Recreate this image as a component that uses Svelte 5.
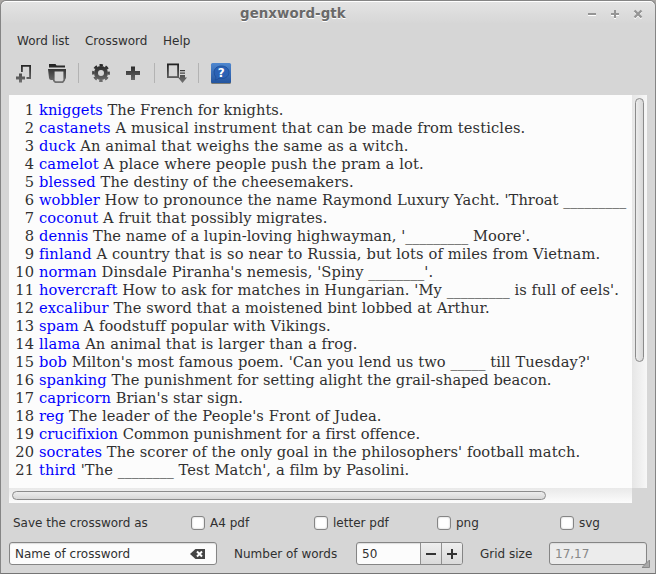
<script>
  // Each entry: word, clue, extra width in px spread over the line
  const words = [
    ['kniggets', 'The French for knights.', 0],
    ['castanets', 'A musical instrument that can be made from testicles.', 7.5],
    ['duck', 'An animal that weighs the same as a witch.', 6],
    ['camelot', 'A place where people push the pram a lot.', 6],
    ['blessed', 'The destiny of the cheesemakers.', 5],
    ['wobbler', "How to pronounce the name Raymond Luxury Yacht. 'Throat _________", 3],
    ['coconut', 'A fruit that possibly migrates.', 2.5],
    ['dennis', "The name of a lupin-loving highwayman, '_________ Moore'.", 2],
    ['finland', 'A country that is so near to Russia, but lots of miles from Vietnam.', 9],
    ['norman', "Dinsdale Piranha's nemesis, 'Spiny ________'.", 3.5],
    ['hovercraft', "How to ask for matches in Hungarian. 'My _________ is full of eels'.", 6.5],
    ['excalibur', 'The sword that a moistened bint lobbed at Arthur.', 4],
    ['spam', 'A foodstuff popular with Vikings.', 2.5],
    ['llama', 'An animal that is larger than a frog.', 5],
    ['bob', "Milton's most famous poem. 'Can you lend us two _____ till Tuesday?'", 7],
    ['spanking', 'The punishment for setting alight the grail-shaped beacon.', 2],
    ['capricorn', "Brian's star sign.", 1.5],
    ['reg', "The leader of the People's Front of Judea.", 3.5],
    ['crucifixion', 'Common punishment for a first offence.', 0.5],
    ['socrates', "The scorer of the only goal in the philosophers' football match.", 6.5],
    ['third', "'The ________ Test Match', a film by Pasolini.", 4.5]
  ];
  const spacing = ([word, clue, extra]) => extra / (word.length + 1 + clue.replace(/_/g, '').length);
  const formats = ['A4 pdf', 'letter pdf', 'png', 'svg'];
  let checked = $state([false, false, false, false]);
</script>

<div class="window">
  <header>
    <h1>genxword-gtk</h1>
    <svg class="controls" width="60" height="12" viewBox="0 0 60 12">
      <g fill="none" stroke="#fff" stroke-width="2" transform="translate(0 1)"><path d="M2 6h8M25 6h8M29 2v8M48.500 2.500l7 7M55.500 2.500l-7 7" /></g>
      <g fill="none" stroke="#959595" stroke-width="2"><path d="M2 6h8M25 6h8M29 2v8" /><path stroke-width="2.400" d="M48.500 2.500l7 7M55.500 2.500l-7 7" /></g>
    </svg>
  </header>
  <nav><span>Word list</span><span>Crossword</span><span>Help</span></nav>
  <div class="toolbar">
    <svg width="240" height="34" viewBox="0 0 240 34">
      <defs>
        <linearGradient id="ink" gradientUnits="userSpaceOnUse" x1="0" y1="9" x2="0" y2="28"><stop stop-color="#202020" /><stop offset="1" stop-color="#747474" /></linearGradient>
        <linearGradient id="blue" x2="0" y2="1"><stop stop-color="#4f87cf" /><stop offset="1" stop-color="#23549f" /></linearGradient>
      </defs>
      <path d="M21.900 17V10.900H30.100V23H26.500" fill="none" stroke="url(#ink)" stroke-width="1.8" />
      <path d="M19 18.500h3v3h3v3h-3v3h-3v-3h-3v-3h3z" fill="url(#ink)" />
      <path d="M49 9h6.500l1 1.500h8.500v2h-16zM48 14h18v8.500q0 2-2 2.500V15.500H53V25H51q-1.800 0-2-2z" fill="url(#ink)" />
      <path d="M53.800 15.800h10.400v9.400l-1.500 1.900h-7.400l-1.500-1.500z" fill="#d6d6d6" stroke="url(#ink)" stroke-width="1.600" />
      <path d="M78.500 8v20M154.500 8v20M198.500 8v20" stroke="#b3b3b3" />
      <g fill="none" stroke="url(#ink)">
        <circle cx="101" cy="18" r="5" stroke-width="4" />
        <circle cx="101" cy="18" r="7.800" stroke-width="2.200" stroke-dasharray="3.500 2.626" stroke-dashoffset="1.750" />
      </g>
      <path d="M131 11.500h4v4.500h5v4h-5v5h-4v-5h-5v-4h5z" fill="url(#ink)" />
      <rect x="167.900" y="9.400" width="10.200" height="12.700" fill="none" stroke="url(#ink)" stroke-width="1.800" />
      <path d="M180 15h5v1.300h-5zM180 17.500h5v1.300h-5zM180 20h5v2.500h2L182.500 28L178 22.500h2z" fill="url(#ink)" />
      <rect x="211" y="9" width="20" height="20" rx="1.500" fill="#7c7c74" />
      <rect x="211" y="8" width="20" height="20" rx="1.500" fill="url(#blue)" />
      <path d="M221.500 11c4.500 0 7.500 2.800 7.500 6.300s-3 6.300-7.500 6.300l-2.500-.3q-2 1.600-4 1.700q1-1.300 1-3q-2-2-2-4.700c0-3.500 3-6.300 7.500-6.300z" fill="#2b62b5" stroke="#1c4c97" stroke-width=".8" />
      <text x="221.300" y="21.700" text-anchor="middle" class="question">?</text>
    </svg>
  </div>

  <main>
    <div class="paper">
      {#each words as entry, i}
        <div class="row">
          <span class="number">{i + 1}</span>
          <p style:letter-spacing="{spacing(entry)}px"><b>{entry[0]}</b> {#each entry[1].split(/(_+)/) as part}{#if part.startsWith('_')}<span class="blank">{part}</span>{:else}{part}{/if}{/each}</p>
        </div>
      {/each}
    </div>
    <div class="vtrack"><i></i></div>
    <div class="htrack"><i></i></div>
  </main>

  <div class="save">
    <span class="caption">Save the crossword as</span>
    {#each formats as format, i}
      <label><input type="checkbox" bind:checked={checked[i]} />{format}</label>
    {/each}
  </div>
  <footer>
    <div class="entry name"><span>Name of crossword</span>
      <svg width="16" height="12" viewBox="0 0 16 12"><path d="M0 6l5.500-5H15v10H5.500z" fill="#444" /><path d="M7 3.500l5 5M12 3.500L7 8.500" stroke="#fff" stroke-width="2" /></svg>
    </div>
    <span class="words">Number of words</span>
    <div class="spinner"><span>50</span>
      <button aria-label="Decrease"><svg width="12" height="12"><path d="M1 6h10" /></svg></button>
      <button aria-label="Increase"><svg width="12" height="12"><path d="M1 6h10M6 1v10" /></svg></button>
    </div>
    <span class="grid-label">Grid size</span>
    <div class="entry grid">17,17</div>
  </footer>
  <svg class="grip" width="8" height="8"><path d="M7.500 0v7.500H0z" fill="#aaa" stroke="#8a8a8a" /></svg>
</div>

<style>
  :global(body) { background: #a9a6a3; overflow: hidden; }
  .window { box-sizing: border-box; position: relative; width: 656px; height: 574px; overflow: hidden; border: 1px solid #858585; border-bottom-color: #757575; border-radius: 6px 6px 0 0; background: linear-gradient(#e4e4e4, #d6d6d6 23px); box-shadow: inset 0 1px #fff; color: #303030; font: 12px "DejaVu Sans", sans-serif; display: flex; flex-direction: column; }
  header { height: 26px; flex: none; display: flex; align-items: center; }
  h1 { margin: 0 0 0 239px; width: 346px; font: bold 13.333px/18px "DejaVu Sans", sans-serif; letter-spacing: .1px; color: #696969; text-shadow: 0 1px #fff; }
  nav { height: 28px; flex: none; display: flex; align-items: center; padding-left: 16px; gap: 15.700px; }
  .toolbar { height: 40px; flex: none; }
  .toolbar svg { display: block; margin-left: -1px; }
  .question { font: bold 12px "DejaVu Sans", sans-serif; fill: #fff; }
  main { flex: none; height: 408px; margin-left: 8px; width: 638px; display: grid; grid-template: 393px 15px / 623px 15px; }
  .paper { background: #fcfcfc; padding-top: 6px; overflow: hidden; font: 14.667px/18px "DejaVu Serif", serif; white-space: nowrap; }
  .row { display: flex; height: 18px; }
  .number { width: 25px; text-align: right; margin-right: 5px; }
  p { margin: 0; }
  b { font-weight: 400; color: #00f; }
  .blank { font-size: 14px; letter-spacing: 0; }
  .vtrack { background: linear-gradient(90deg, #e6e6e6, #f7f7f7); padding: 3px; }
  .htrack { background: linear-gradient(#e9e9e9, #fcfcfc); padding: 3px; }
  .vtrack i, .htrack i { display: block; box-sizing: border-box; border: 1px solid #8b8b8b; border-radius: 5px; }
  .vtrack i { width: 9px; height: 264px; background: linear-gradient(90deg, #ececec, #d7d7d7); }
  .htrack i { width: 534px; height: 9px; background: linear-gradient(#ececec, #d7d7d7); }
  .save { height: 39px; flex: none; display: flex; align-items: center; padding-left: 12px; }
  .caption { width: 178px; flex: none; }
  label { width: 123px; flex: none; display: flex; align-items: center; gap: 5px; }
  label:last-child { width: 60px; }
  input { appearance: none; box-sizing: border-box; width: 14px; height: 14px; margin: 0; border: 1px solid #858585; border-radius: 3px; background: #fff; box-shadow: inset 0 0 2px #bbb; }
  footer { display: flex; align-items: center; padding-left: 8px; height: 23px; flex: none; }
  .entry, .spinner { box-sizing: border-box; height: 23px; flex: none; border: 1px solid #858585; border-radius: 3px; background: #fcfcfc; display: flex; align-items: center; box-shadow: inset 0 1px 1px #ddd; }
  .name { width: 208px; padding: 0 10px 0 5px; justify-content: space-between; }
  .words { width: 122px; margin-left: 17px; }
  .spinner { width: 107px; padding-left: 5px; overflow: hidden; }
  .spinner span { width: 58px; flex: none; }
  button { box-sizing: border-box; width: 21px; height: 21px; flex: none; padding: 0 1px 0 0; border: 0; border-left: 1px solid #909090; background: linear-gradient(#eee, #dadada); display: flex; align-items: center; justify-content: center; }
  button path { stroke: #333; stroke-width: 2; fill: none; }
  .grid-label { width: 69px; margin-left: 17px; }
  .grid { width: 98px; padding-left: 5px; background: #ececec; color: #888; }
  .grip { position: absolute; right: 5px; bottom: 5px; }
</style>
